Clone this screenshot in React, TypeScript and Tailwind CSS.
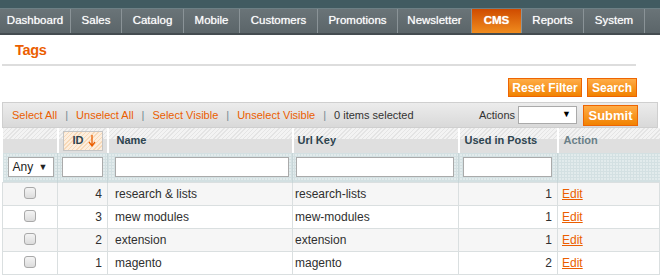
import { memo } from 'react'

const NavItems = ['Dashboard', 'Sales', 'Catalog', 'Mobile', 'Customers', 'Promotions', 'Newsletter', 'CMS', 'Reports', 'System']
const NavWidths = ['w-[71px]', 'w-[51px]', 'w-[62px]', 'w-[56px]', 'w-[78px]', 'w-[80px]', 'w-[74px]', 'w-[50px]', 'w-[62px]', 'w-[61px]']

const Rows = [
  { id: 4, name: 'research & lists', url: 'research-lists', posts: 1 },
  { id: 3, name: 'mew modules', url: 'mew-modules', posts: 1 },
  { id: 2, name: 'extension', url: 'extension', posts: 1 },
  { id: 1, name: 'magento', url: 'magento', posts: 2 },
]

const hatch =
  'bg-[linear-gradient(to_bottom,transparent_45%,#dfdfdf_45%),repeating-linear-gradient(135deg,#e4e4e4_0px,#e4e4e4_1px,#f3f3f3_1px,#f3f3f3_3px)]'
const filterBg =
  'bg-[repeating-linear-gradient(0deg,#d3e0e2_0px,#d3e0e2_1px,transparent_1px,transparent_3px),repeating-linear-gradient(90deg,#d3e0e2_0px,#d3e0e2_1px,#e2ebec_1px,#e2ebec_3px)]'
const orangeBtn =
  'border border-[#ed6502] bg-[linear-gradient(to_bottom,#ffac47,#f18200)] font-bold text-white'

const App = () => {
  return (
    <div className="h-[279px] w-[660px] overflow-hidden bg-white font-['Liberation_Sans',Arial,sans-serif] text-[#2f2f2f]">
      {/* header strip + main nav */}
      <div className="h-[8px] bg-[#415b61]" />
      <div className="flex h-[27px] border-t border-[#6d8085] border-b-2 border-b-[#444c50] bg-[linear-gradient(to_bottom,#6a7478,#5b6569)]">
        {NavItems.map((item, i) => (
          <div
            key={item}
            className={`${NavWidths[i]} flex items-center justify-center border-r border-r-[#8a9397] text-[11.5px] text-white [text-shadow:0_0_1px_rgba(255,255,255,0.7)] ${
              item === 'CMS'
                ? 'bg-[linear-gradient(to_bottom,#cf4b00,#f08c1e)] font-bold'
                : ''
            }`}
          >
            {item}
          </div>
        ))}
      </div>

      <div className="px-[2px]">
        <h3 className="ml-[13px] mt-[5px] h-[20px] text-[14.5px] font-bold leading-[20px] tracking-[-0.3px] text-[#eb5e00]">
          Tags
        </h3>
        <div className="mt-[4px] h-[2px] w-[634px] bg-[#dddddd]" />

        <div className="mt-[12px] flex justify-end gap-[5px] pr-[21px]">
          <button className={`${orangeBtn} h-[19px] w-[74px] text-[12px] leading-none`}>Reset Filter</button>
          <button className={`${orangeBtn} h-[19px] w-[50px] text-[12px] leading-none`}>Search</button>
        </div>

        {/* massaction bar */}
        <div className="mt-[5px] flex h-[26px] items-center border border-[#cfcfcf] bg-[linear-gradient(to_bottom,#ececec,#d9d9d9)] pl-[9px] text-[11px]">
          <span className="text-[#eb5e00]">Select All</span>
          <span className="mx-[8px] text-[#6f8992]">|</span>
          <span className="text-[#eb5e00]">Unselect All</span>
          <span className="mx-[8px] text-[#6f8992]">|</span>
          <span className="text-[#eb5e00]">Select Visible</span>
          <span className="mx-[8px] text-[#6f8992]">|</span>
          <span className="text-[#eb5e00]">Unselect Visible</span>
          <span className="mx-[8px] text-[#6f8992]">|</span>
          <span className="text-[#333]">0 items selected</span>
          <span className="ml-auto text-[#333]">Actions</span>
          <div className="ml-[3px] flex h-[18px] w-[59px] items-center justify-end border border-[#aaa] bg-white pr-[5px] text-[9px] text-black">
            ▼
          </div>
          <button className={`${orangeBtn} ml-[6px] mr-[19px] h-[21px] w-[55px] text-[13px] leading-none`}>Submit</button>
        </div>

        <table className="w-[657px] table-fixed border-collapse text-[12px]">
          <colgroup>
            <col className="w-[55px]" />
            <col className="w-[50px]" />
            <col className="w-[185px]" />
            <col className="w-[166px]" />
            <col className="w-[99px]" />
            <col className="w-[102px]" />
          </colgroup>
          <thead>
            <tr className={`h-[25px] ${hatch} text-[11px] font-bold text-[#2d444f]`}>
              <th className="border-r-2 border-white" />
              <th className="border-r-2 border-white px-[4px] py-[2px]">
                <div className="flex h-[20px] items-center justify-between border border-[#c5c5c5] bg-[repeating-linear-gradient(135deg,#f7d9b8_0px,#f7d9b8_1px,#fdeede_1px,#fdeede_3px)] pl-[9px] pr-[6px]">
                  <span>ID</span>
                  <svg width="8" height="12" viewBox="0 0 8 12" className="text-[#eb5e00]">
                    <path d="M4 0v10M1 7l3 4 3-4" stroke="currentColor" strokeWidth="1.3" fill="none" />
                  </svg>
                </div>
              </th>
              <th className="border-r-2 border-white pl-[8px] text-left">Name</th>
              <th className="border-r-2 border-white pl-[4px] text-left">Url Key</th>
              <th className="border-r-2 border-white pl-[5px] text-left">Used in Posts</th>
              <th className="pl-[5px] text-left text-[#6a7f88]">Action</th>
            </tr>
            <tr className={`h-[29px] ${filterBg} border-b border-[#c2d3d6]`}>
              <td className="border-r border-[#c8d6d8] pl-[5px]">
                <div className="flex h-[20px] w-[46px] items-center justify-between border border-[#aaa] bg-white pl-[4px] pr-[5px] text-[12px] text-[#222]">
                  <span>Any</span>
                  <span className="text-[9px]">▼</span>
                </div>
              </td>
              <td className="border-r border-[#c8d6d8] px-[4px]">
                <div className="h-[20px] border border-[#aaa] bg-white" />
              </td>
              <td className="border-r border-[#c8d6d8] pl-[7px] pr-[3px]">
                <div className="h-[20px] border border-[#aaa] bg-white" />
              </td>
              <td className="border-r border-[#c8d6d8] pl-[3px] pr-[4px]">
                <div className="h-[20px] border border-[#aaa] bg-white" />
              </td>
              <td className="border-r border-[#c8d6d8] pl-[4px] pr-[5px]">
                <div className="h-[20px] border border-[#aaa] bg-white" />
              </td>
              <td />
            </tr>
          </thead>
          <tbody>
            {Rows.map((row, i) => (
              <tr key={row.id} className={`h-[23px] ${i % 2 === 0 ? 'bg-[#f6f6f6]' : 'bg-white'}`}>
                <td className="border border-[#dadfe0] text-center">
                  <span className="inline-block h-[12px] w-[12px] translate-y-[1px] rounded-[3px] border border-[#a9a9a9] bg-[linear-gradient(to_bottom,#f4f4f4,#dcdcdc)]" />
                </td>
                <td className="border border-[#dadfe0] pr-[5px] text-right">{row.id}</td>
                <td className="border border-[#dadfe0] pl-[7px]">{row.name}</td>
                <td className="border border-[#dadfe0] pl-[2px]">{row.url}</td>
                <td className="border border-[#dadfe0] pr-[5px] text-right">{row.posts}</td>
                <td className="border border-[#dadfe0] pl-[4px]">
                  <a className="text-[#eb5e00] underline">Edit</a>
                </td>
              </tr>
            ))}
          </tbody>
        </table>
      </div>
    </div>
  )
}

export default memo(App)
